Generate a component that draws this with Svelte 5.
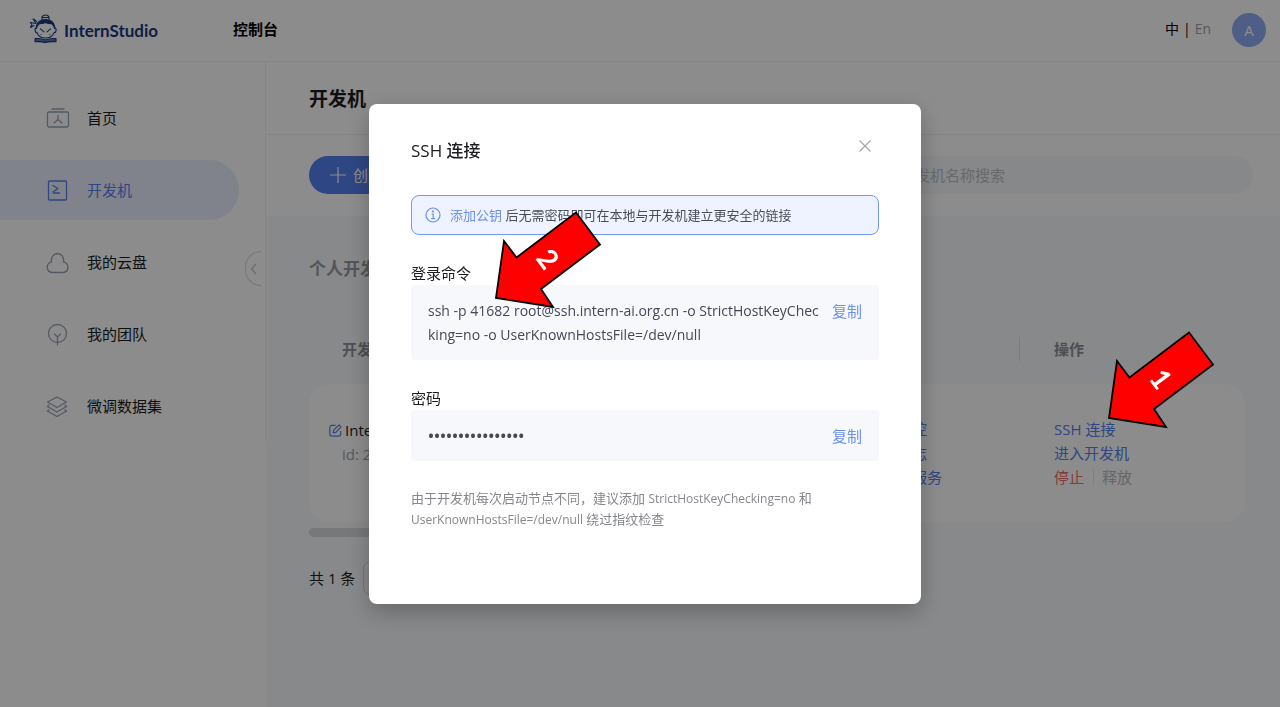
<script>
  const menu = [
    { id: 'home', label: '首页' },
    { id: 'dev', label: '开发机', active: true },
    { id: 'cloud', label: '我的云盘' },
    { id: 'team', label: '我的团队' },
    { id: 'data', label: '微调数据集' }
  ];
  const command =
    'ssh -p 41682 root@ssh.intern-ai.org.cn -o StrictHostKeyChecking=no -o UserKnownHostsFile=/dev/null';
  const arrows = [
    { n: '1', cls: 'one' },
    { n: '2', cls: 'two' }
  ];
</script>

<div class="page">
  <header class="topbar">
    <a class="logo" href="#home" aria-label="InternStudio">
      <svg width="30" height="30" viewBox="0 0 30 30" fill="none" stroke="#1b3882" stroke-width="1.1" stroke-linejoin="round" stroke-linecap="round">
        <path d="M13 5.500V2.800Q14 1 16.500 1T20 2.800V5.500M13.300 3.500h6.400" />
        <path d="M7.500 12Q9 5.500 16.500 5.500T25.500 12L25.800 14.500Q25 11.500 22.800 9.800Q19 9.800 16.500 8.600Q14 9.800 10.200 9.800Q8 11.500 7.200 14.500Z" fill="#1b3882" />
        <path d="M7.200 14Q5.500 14 6.200 17Q6.800 19 8.200 18.800Q9.700 24 16.500 24T24.800 18.800Q26.500 19 27 17Q27.500 14 25.800 14" />
        <path d="M11.500 14.800l3.500 3M21.500 14.800l-3.500 3M12 20.500v.1M21 20.500v.1" />
        <path d="M7 9.500L1.200 8.500L3 10.500L1.500 13.500L5 11.500M6.500 8.500L4 5L6.200 6L8 8" />
        <path d="M6 24.600Q12 24 16.500 26Q21 24 27 24.600V27.800Q20 27.300 16.500 28.600Q12 27.300 6 27.800Z" fill="#6078ad" />
      </svg>
      <span>InternStudio</span>
    </a>
    <a class="console" href="#console">控制台</a>
    <div class="lang"><button class="cur">中</button><span>|</span><button>En</button></div>
    <button class="avatar" aria-label="A">A</button>
  </header>

  <div class="body">
    <aside>
      <nav>
        {#each menu as m (m.id)}
          <a class="item" class:active={m.active} href={'#' + m.id}>
            <svg width="24" height="24" viewBox="0 0 24 24" fill="none" stroke="currentColor" stroke-width="1.3" stroke-linecap="round" stroke-linejoin="round">
              {#if m.id === 'home'}
                <path d="M6 3h12" /><rect x="1.500" y="6" width="21" height="15" rx="1.500" /><path d="M12 9.500v4M12 13.500l-4 3.500M12 13.500l4 3.500" />
              {:else if m.id === 'dev'}
                <rect x="2.500" y="3" width="18" height="19" rx="1" /><path d="M7 7.500l5 3-5 3.500M7.500 15h6" />
              {:else if m.id === 'cloud'}
                <path d="M6 22.500a5.300 5.300 0 0 1-.7-10.400C4.800 7 7.800 3.500 11.500 3.500S18.200 7 17.700 12.100A5.300 5.300 0 0 1 17.500 22.500Z" />
              {:else if m.id === 'team'}
                <circle cx="11.500" cy="11.500" r="9" /><path d="M11.500 23V15M8.500 12l3 3 3-3" />
              {:else}
                <path d="M11 3l9.500 5L11 13.500 1.500 8Z" /><path d="M1.500 12.500L11 18l9.500-5.500M1.500 17L11 22.500 20.500 17M3 11l-1.500 1.500M19 11l1.500 1.500M3 15.800L1.500 17M19 15.800L20.500 17" />
              {/if}
            </svg>
            <span>{m.label}</span>
          </a>
        {/each}
      </nav>
      <button class="fold" aria-label="收起">
        <svg width="8" height="12" viewBox="0 0 8 12" fill="none" stroke="#c3c6cc" stroke-width="1.300"><path d="M6 1L1.500 6 6 11" /></svg>
      </button>
    </aside>

    <main>
      <h1>开发机</h1>
      <div class="tools">
        <button class="create">
          <svg width="16" height="16" viewBox="0 0 16 16" stroke="#fff" stroke-width="1.200"><path d="M8 0v16M0 8h16" /></svg>
          创建开发机
        </button>
        <input class="search" type="text" aria-label="搜索" placeholder="请输入开发机名称搜索" />
      </div>
      <section class="list">
        <h2>个人开发机</h2>
        <table>
          <thead>
            <tr><th class="c1">开发机名称</th><th class="c2"></th><th class="c3">操作</th></tr>
          </thead>
          <tbody>
            <tr>
              <td class="c1">
                <div class="name">
                  <svg width="13" height="13" viewBox="0 0 13 13" fill="none" stroke="#5580ee" stroke-width="1.200" stroke-linejoin="round"><path d="M6.500 1.300H3Q.8 1.300 .8 3.500V10Q.8 12.200 3 12.200H9.500Q11.700 12.200 11.700 10V7M4.300 8.800L4.700 6.200 10 .900 12 2.900 6.800 8.300Z" /></svg>
                  InternLM
                </div>
                <div class="id">id: 29431</div>
              </td>
              <td class="c2"><a href="#m">资源监控</a><a href="#l">查看日志</a><a href="#s">自定义服务</a></td>
              <td class="c3">
                <a href="#ssh">SSH 连接</a><a href="#open">进入开发机</a>
                <div class="ops"><button class="stop">停止</button><button class="free" disabled>释放</button></div>
              </td>
            </tr>
          </tbody>
        </table>
        <div class="scroll"></div>
        <div class="pager"><span>共 1 条</span><button aria-label="上一页"></button></div>
      </section>
    </main>
  </div>
</div>

<div class="mask">
  <div class="dialog" role="dialog" aria-modal="true" aria-labelledby="dlg-title">
    <div class="dhead">
      <h3 id="dlg-title">SSH 连接</h3>
      <button class="close" aria-label="关闭">
        <svg width="12" height="12" viewBox="0 0 12 12" stroke="#a3a6ae" stroke-width="1.200"><path d="M.5 .5l11 11M11.500 .5l-11 11" /></svg>
      </button>
    </div>
    <div class="tip">
      <svg width="16" height="16" viewBox="0 0 16 16" fill="none" stroke="#6a90f2" stroke-width="1.200"><circle cx="8" cy="8" r="7" /><path d="M6.500 7H8.200V11.600M6.200 11.600H10" /><circle cx="8" cy="4.500" r=".5" fill="#6a90f2" /></svg>
      <p><a href="#key">添加公钥</a> 后无需密码即可在本地与开发机建立更安全的链接</p>
    </div>
    <div class="label">登录命令</div>
    <div class="box"><code>{command}</code><button>复制</button></div>
    <div class="label">密码</div>
    <div class="box"><span class="dots">••••••••••••••••</span><button>复制</button></div>
    <p class="note">由于开发机每次启动节点不同，建议添加 <span>StrictHostKeyChecking=no</span> 和 <span>UserKnownHostsFile=/dev/null</span> 绕过指纹检查</p>
  </div>
</div>

{#each arrows as a (a.n)}
  <svg class="arrow {a.cls}" width="110" height="100" viewBox="0 0 110 100">
    <path d="M2 88L10 31 22.500 47.500 82 2.500 106 34.500 47 79 59 97Z" fill="#f00" stroke="#000" stroke-width="1.800" />
    <text transform="translate(54 49) rotate(53)" text-anchor="middle" y="10">{a.n}</text>
  </svg>
{/each}

<style>
  :global(body) { margin: 0; background: #fff; }
  .page, .mask { font: 15px/24px "Open Sans", "Noto Sans CJK SC", sans-serif; color: #1c1d20; }
  .page { min-height: 100vh; display: flex; flex-direction: column; }
  a { color: inherit; text-decoration: none; }
  button { font: inherit; color: inherit; background: none; border: 0; padding: 0; }
  h1, h2, h3, p { margin: 0; }
  svg { flex: none; }

  .topbar { height: 62px; box-sizing: border-box; border-bottom: 1px solid #eef0f3; display: flex; align-items: center; padding: 0 14px 4px 29px; }
  .logo { display: flex; align-items: center; gap: 5px; width: 204px; font: 700 17px/24px Lato, sans-serif; color: #1b3882; }
  .logo span { padding-top: 4px; }
  .console { font-weight: 700; color: #000; }
  .lang { margin-left: auto; display: flex; gap: 4px; font-size: 14px; color: #a0a2a6; }
  .lang .cur, .lang span { color: #000; }
  .avatar { width: 34px; height: 34px; border-radius: 50%; background: #8eabf6; color: #fff; margin: 3px 0 0 21px; }

  .body { flex: 1; display: flex; }
  aside { width: 266px; flex: none; position: relative; }
  nav { padding: 26px 0 5px; display: flex; flex-direction: column; gap: 12px; border-right: 1px solid #f0f1f4; }
  .item { height: 60px; margin-right: 26px; padding-left: 46px; display: flex; align-items: center; gap: 17px; border-radius: 0 30px 30px 0; }
  .item svg { color: #98a2b8; }
  .item.active { background: #e9effd; color: #5580ee; }
  .item.active svg { color: #5580ee; }
  .fold { position: absolute; right: 5px; top: 189px; width: 16px; height: 35px; border: 1px solid #d6d8dc; border-right: 0; border-radius: 18px 0 0 18px; display: flex; align-items: center; justify-content: center; }

  main { flex: 1; min-width: 0; background: #f7f9fc; display: flex; flex-direction: column; }
  h1 { font-size: 19px; line-height: 72px; height: 73px; box-sizing: border-box; padding: 1px 43px 0; background: #fff; border-bottom: 1px solid #eef0f3; }
  .tools { display: flex; justify-content: space-between; padding: 21px 27px 22px 43px; background: #fff; }
  .create { display: flex; align-items: center; gap: 7px; height: 38px; padding: 0 21px; border-radius: 19px; background: #5580ee; color: #fff; }
  .search { width: 418px; height: 38px; box-sizing: border-box; border: 0; border-radius: 19px; background: #f5f7fb; padding: 0 20px; font: inherit; }
  .search::placeholder { color: #bcbfc5; opacity: 1; }
  .list { padding: 41px 35px 0 43px; }
  h2 { font-size: 17px; line-height: 24px; color: #989ba3; }
  table { width: 100%; border-collapse: separate; border-spacing: 0; margin-top: 56px; table-layout: fixed; }
  th { text-align: left; color: #8e9199; font-weight: 700; padding: 0; height: 24px; }
  th.c1 { padding-left: 33px; width: 525px; }
  th.c2 { width: 152px; border-right: 1px solid #dfe2e8; }
  th.c3 { padding-left: 34px; }
  thead::after { content: ""; display: block; height: 23px; }
  td { background: #fff; height: 138px; padding: 0; }
  td.c1 { border-radius: 20px 0 0 20px; padding: 0 0 22px 20px; height: 116px; }
  td.c3 { border-radius: 0 20px 20px 0; padding-left: 34px; }
  td a { display: block; color: #5580ee; }
  .name { display: flex; align-items: center; gap: 3px; }
  .id { padding-left: 13px; color: #a0a3ab; }
  .ops { display: flex; }
  .stop { color: #f56c6c; padding-right: 9px; }
  .free { color: #b8bbc2; padding-left: 8px; border-left: 1px solid #e5e7eb; line-height: 16px; margin: 4px 0; }
  .scroll { width: 500px; height: 9px; margin-top: 6px; border-radius: 5px; background: #d9dbdf; }
  .pager { display: flex; align-items: center; gap: 8px; margin-top: 24px; }
  .pager button { width: 34px; height: 34px; border: 1px solid #d0d3d9; border-radius: 8px; }

  .mask { position: fixed; inset: 0; background: rgba(0, 0, 0, .45); display: flex; justify-content: center; align-items: flex-start; padding: 104px 0 0 10px; }
  .dialog { width: 468px; padding: 35px 42px 74px; background: #fff; border-radius: 8px; box-shadow: 0 8px 24px rgba(0, 0, 0, .25); }
  .dhead { display: flex; justify-content: space-between; align-items: flex-start; }
  h3 { font-size: 17px; font-weight: 500; line-height: 24px; }
  .close { width: 28px; height: 14px; display: flex; align-items: center; justify-content: center; }
  .tip { display: flex; align-items: center; gap: 9px; margin-top: 32px; padding: 9px 13px; border: 1px solid #7299f2; border-radius: 8px; background: #eef3ff; font-size: 13px; line-height: 20px; color: #4a4c5c; }
  .tip a { color: #6a90f2; }
  .label { margin-top: 26px; line-height: 24px; }
  .box { display: flex; align-items: flex-start; gap: 8px; padding: 14px 17px 13px; border-radius: 4px; background: #f7f8fb; color: #45475a; }
  .box code, .box .dots { flex: 1; min-width: 0; font-family: inherit; font-size: 14px; word-break: break-all; }
  .box .dots { font-size: 16px; font-weight: 600; }
  .box button { color: #6a90f2; white-space: nowrap; }
  .note { margin-top: 27px; font-size: 13px; line-height: 20px; color: #85878c; }
  .note span { font-size: 12px; }

  .arrow { position: fixed; }
  .arrow.one { left: 1107px; top: 330px; }
  .arrow.two { left: 494px; top: 210px; }
  .arrow text { font: 700 28px Lato, sans-serif; fill: #fff; }
</style>
